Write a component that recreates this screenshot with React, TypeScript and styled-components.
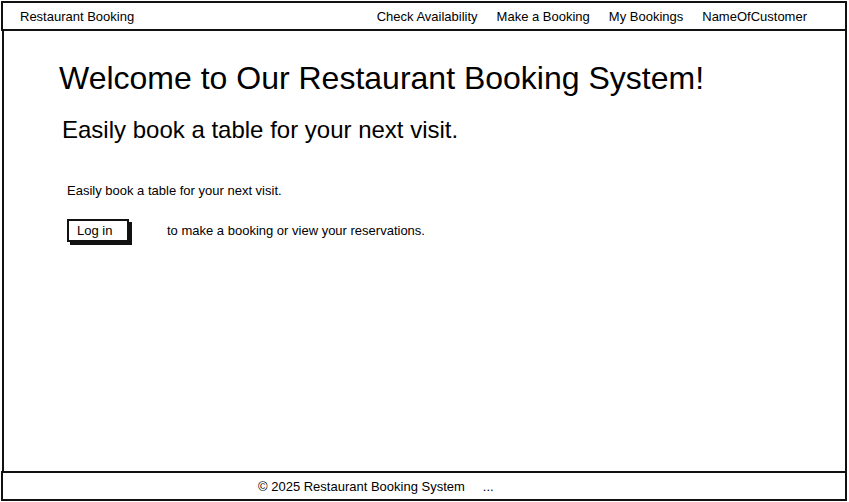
import React from "react";
import styled, { createGlobalStyle } from "styled-components";

const Global = createGlobalStyle`
  html, body { margin: 0; padding: 0; background: #fff; }
  body { font-family: "Liberation Sans", Arial, sans-serif; color: #000; }
`;

const Page = styled.div`
  width: 849px;
  height: 502px;
  box-sizing: border-box;
  padding: 1px 2px 1px 1px;
  display: flex;
  flex-direction: column;
`;

const Bar = styled.div<{ $center?: boolean }>`
  height: 30px;
  box-sizing: border-box;
  border: 2px solid #111;
  display: flex;
  align-items: center;
  justify-content: ${(p) => (p.$center ? "flex-start" : "space-between")};
  padding: ${(p) => (p.$center ? "0 0 0 255px" : "0 38px 0 17px")};
  font-size: 13px;
  flex-shrink: 0;
`;

const Nav = styled.nav`
  display: flex;
  gap: 19px;
`;

const NavItem = styled.span`
  font-size: 13px;
  white-space: nowrap;
`;

const Main = styled.main`
  flex: 1;
  border-left: 2px solid #111;
  border-right: 2px solid #111;
  margin: 0 0 0 1px;
  padding: 27px 0 0 55px;
  box-sizing: border-box;
`;

const Title = styled.h1`
  margin: 0;
  font-size: 32px;
  font-weight: 400;
  line-height: 40px;
`;

const Subtitle = styled.h2`
  margin: 18px 0 0 3px;
  font-size: 24px;
  font-weight: 400;
  line-height: 28px;
`;

const Small = styled.p`
  margin: 39px 0 0 8px;
  font-size: 13px;
  line-height: 16px;
`;

const Row = styled.div`
  display: flex;
  align-items: center;
  margin: 20px 0 0 8px;
`;

const Button = styled.button`
  width: 62px;
  height: 23px;
  box-sizing: border-box;
  border: 2px solid #111;
  background: #fff;
  box-shadow: 3px 3px 0 #111;
  font-family: inherit;
  font-size: 13px;
  padding: 0 0 0 8px;
  text-align: left;
  color: #000;
`;

const Note = styled.span`
  margin-left: 38px;
  font-size: 13px;
`;

const Dots = styled.span`
  margin-left: 18px;
`;

export default function App() {
  return (
    <>
      <Global />
      <Page>
        <Bar>
          <span>Restaurant Booking</span>
          <Nav>
            <NavItem>Check Availability</NavItem>
            <NavItem>Make a Booking</NavItem>
            <NavItem>My Bookings</NavItem>
            <NavItem>NameOfCustomer</NavItem>
          </Nav>
        </Bar>
        <Main>
          <Title>Welcome to Our Restaurant Booking System!</Title>
          <Subtitle>Easily book a table for your next visit.</Subtitle>
          <Small>Easily book a table for your next visit.</Small>
          <Row>
            <Button>Log in</Button>
            <Note>to make a booking or view your reservations.</Note>
          </Row>
        </Main>
        <Bar $center>
          <span>© 2025 Restaurant Booking System</span>
          <Dots>...</Dots>
        </Bar>
      </Page>
    </>
  );
}
